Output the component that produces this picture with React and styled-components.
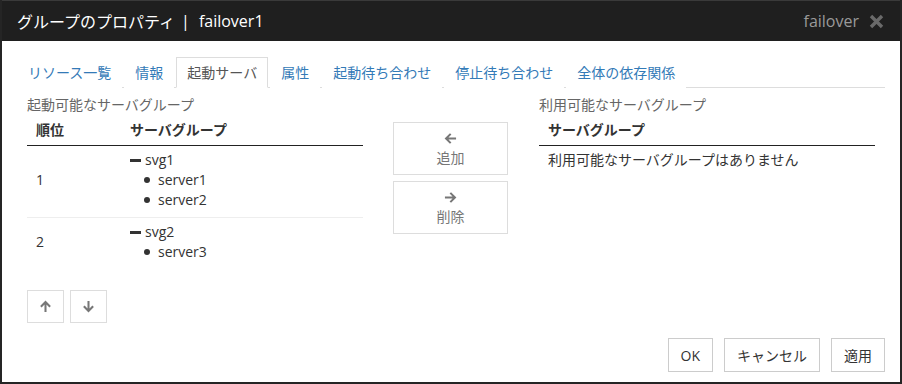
import React from 'react'
import styled, { createGlobalStyle } from 'styled-components'

const GlobalStyle = createGlobalStyle`
  html, body {
    margin: 0;
    padding: 0;
    background: #ffffff;
  }
  body {
    font-family: "Open Sans", "Noto Sans CJK JP", sans-serif;
    font-size: 14px;
    color: #333;
  }
`

const Dialog = styled.div`
  box-sizing: border-box;
  width: 902px;
  height: 384px;
  display: flex;
  flex-direction: column;
  border: 2px solid #252525;
  border-top: none;
  background: #fff;
`

const TitleBar = styled.div`
  height: 41px;
  flex-shrink: 0;
  background: #1f1f1f;
  border-top: 1px solid #3a3a3a;
  box-sizing: border-box;
  display: flex;
  align-items: center;
  padding: 0 16px 0 15px;
  color: #fff;
  font-size: 16px;
`

const Title = styled.div`
  flex: 1;
  display: flex;
  align-items: center;
`

const Divider = styled.span`
  margin: 0 9px 0 6px;
`

const TitleRight = styled.div`
  display: flex;
  align-items: center;
  gap: 10px;
  color: #9a9a9a;
  font-size: 16px;
`

const Body = styled.div`
  flex: 1;
  display: flex;
  flex-direction: column;
  padding: 16px 15px 10px 15px;
`

const Tabs = styled.div`
  display: flex;
  border-bottom: 1px solid #ddd;
  height: 30px;
`

const Tab = styled.div`
  box-sizing: border-box;
  height: 31px;
  padding: 0 10px;
  margin-right: 2px;
  line-height: 29px;
  border: 1px solid ${(p) => (p.active ? '#ddd' : 'transparent')};
  border-bottom-color: ${(p) => (p.active ? '#fff' : 'transparent')};
  background: #fff;
  color: ${(p) => (p.active ? '#555' : '#337ab7')};
  white-space: nowrap;
`

const Content = styled.div`
  display: flex;
  padding: 7px 10px 0 10px;
  gap: 30px;
`

const Panel = styled.div`
  width: 336px;
  display: flex;
  flex-direction: column;
`

const PanelLabel = styled.div`
  color: #666;
  line-height: 20px;
  height: 20px;
`

const Table = styled.div`
  display: flex;
  flex-direction: column;
`

const HeadRow = styled.div`
  display: flex;
  height: 30px;
  align-items: center;
  border-bottom: 1px solid #222;
  font-weight: bold;
  color: #333;
`

const Row = styled.div`
  display: flex;
  align-items: center;
  padding: 4px 0 7px 0;
  border-top: ${(p) => (p.first ? 'none' : '1px solid #eee')};
`

const Cell = styled.div`
  box-sizing: border-box;
  padding: 0 9px;
  width: ${(p) => (p.w ? p.w + 'px' : 'auto')};
  flex: ${(p) => (p.w ? 'none' : 1)};
  line-height: 20px;
`

const GroupName = styled.div`
  display: flex;
  align-items: center;
  line-height: 20px;
`

const Minus = styled.span`
  display: inline-block;
  width: 11px;
  height: 3px;
  background: #333;
  margin-right: 4px;
`

const ServerList = styled.ul`
  list-style: none;
  margin: 0;
  padding: 0 0 0 14px;
`

const Server = styled.li`
  display: flex;
  align-items: center;
  line-height: 20px;
  &::before {
    content: '';
    width: 6px;
    height: 6px;
    border-radius: 50%;
    background: #333;
    margin-right: 8px;
  }
`

const OrderButtons = styled.div`
  display: flex;
  gap: 6px;
  margin-top: 21px;
`

const IconButton = styled.button`
  box-sizing: border-box;
  width: 37px;
  height: 33px;
  border: 1px solid #ddd;
  background: #fff;
  display: flex;
  align-items: center;
  justify-content: center;
  padding: 0;
`

const Middle = styled.div`
  width: 115px;
  padding-top: 27px;
  display: flex;
  flex-direction: column;
  gap: 6px;
  margin-right: 1px;
`

const MoveButton = styled.button`
  box-sizing: border-box;
  width: 115px;
  height: 53px;
  border: 1px solid #ddd;
  background: #fff;
  display: flex;
  flex-direction: column;
  align-items: center;
  justify-content: center;
  gap: 2px;
  font-family: inherit;
  font-size: 14px;
  color: #777;
  padding: 2px 0 0 0;
`

const EmptyText = styled.div`
  padding: 4px 9px;
  line-height: 20px;
`

const Footer = styled.div`
  margin-top: auto;
  display: flex;
  justify-content: flex-end;
  gap: 11px;
`

const FooterButton = styled.button`
  box-sizing: border-box;
  height: 34px;
  padding: 0 12px;
  border: 1px solid #ccc;
  background: #fff;
  font-family: inherit;
  font-size: 14px;
  color: #333;
`

const Arrow = ({ dir, size = 14, color = '#777' }) => {
  const rot = { up: 0, right: 90, down: 180, left: 270 }[dir]
  return (
    <svg width={size} height={size} viewBox="0 0 14 14" style={{ transform: `rotate(${rot}deg)` }}>
      <path d="M7 13V2.5M2 7.2L7 2.2l5 5" fill="none" stroke={color} strokeWidth="2.2" />
    </svg>
  )
}

const CloseIcon = () => (
  <svg width="15" height="15" viewBox="0 0 15 15">
    <path d="M2 2l11 11M13 2L2 13" stroke="#6a6a6a" strokeWidth="3.4" />
  </svg>
)

const tabs = ['リソース一覧', '情報', '起動サーバ', '属性', '起動待ち合わせ', '停止待ち合わせ', '全体の依存関係']

const groups = [
  { order: 1, name: 'svg1', servers: ['server1', 'server2'] },
  { order: 2, name: 'svg2', servers: ['server3'] }
]

export default function App() {
  return (
    <>
      <GlobalStyle />
      <Dialog>
        <TitleBar>
          <Title>
            グループのプロパティ<Divider>|</Divider>failover1
          </Title>
          <TitleRight>
            failover
            <CloseIcon />
          </TitleRight>
        </TitleBar>
        <Body>
          <Tabs>
            {tabs.map((t) => (
              <Tab key={t} active={t === '起動サーバ'}>{t}</Tab>
            ))}
          </Tabs>
          <Content>
            <Panel>
              <PanelLabel>起動可能なサーバグループ</PanelLabel>
              <Table>
                <HeadRow>
                  <Cell w={94}>順位</Cell>
                  <Cell>サーバグループ</Cell>
                </HeadRow>
                {groups.map((g, i) => (
                  <Row key={g.name} first={i === 0}>
                    <Cell w={94}>{g.order}</Cell>
                    <Cell>
                      <GroupName><Minus />{g.name}</GroupName>
                      <ServerList>
                        {g.servers.map((s) => (
                          <Server key={s}>{s}</Server>
                        ))}
                      </ServerList>
                    </Cell>
                  </Row>
                ))}
              </Table>
              <OrderButtons>
                <IconButton><Arrow dir="up" size={13} /></IconButton>
                <IconButton><Arrow dir="down" size={13} /></IconButton>
              </OrderButtons>
            </Panel>
            <Middle>
              <MoveButton><Arrow dir="left" size={13} />追加</MoveButton>
              <MoveButton><Arrow dir="right" size={13} />削除</MoveButton>
            </Middle>
            <Panel>
              <PanelLabel>利用可能なサーバグループ</PanelLabel>
              <Table>
                <HeadRow>
                  <Cell>サーバグループ</Cell>
                </HeadRow>
                <EmptyText>利用可能なサーバグループはありません</EmptyText>
              </Table>
            </Panel>
          </Content>
          <Footer>
            <FooterButton>OK</FooterButton>
            <FooterButton>キャンセル</FooterButton>
            <FooterButton>適用</FooterButton>
          </Footer>
        </Body>
      </Dialog>
    </>
  )
}
